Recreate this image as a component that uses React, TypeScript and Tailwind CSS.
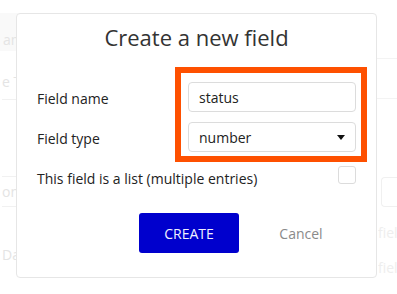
import { useState } from "react";

function Backdrop() {
  return (
    <div className="flex w-full h-full text-[14px] text-[#e4e4e4]">
      <div className="w-[200px] shrink-0 flex flex-col pl-[2px] whitespace-nowrap overflow-hidden">
        <div className="h-[38px] mt-[13px] -ml-[2px] pl-[3px] pt-[14px] bg-[#f9f9f9] flex items-center">
          <span>ame</span>
        </div>
        <div className="h-[49px] flex items-center pt-[12px] border-b border-[#f1f1f1]">
          <span>e Type</span>
        </div>
        <div className="h-[76px]" />
        <div className="h-[31px] flex items-center border-y border-[#f1f1f1]">
          <span>on</span>
        </div>
        <div className="h-[58px] flex items-end">
          <span>Data</span>
        </div>
      </div>
      <div className="flex-1 flex flex-col">
        <div className="h-[59px] border-b border-[#f3f3f3]" />
        <div className="h-[40px] border-b border-[#f3f3f3]" />
        <div className="h-[78px]" />
        <div className="h-[30px] flex justify-end">
          <div className="w-[16px] rounded-l-[4px] border border-r-0 border-[#f0f0f0]" />
        </div>
        <div className="flex flex-col items-end gap-[14px] mt-[15px] text-[#eeeeee]">
          <span className="w-[19px] overflow-hidden whitespace-nowrap">fiel</span>
          <span className="w-[19px] overflow-hidden whitespace-nowrap">fiel</span>
        </div>
      </div>
    </div>
  );
}

export default function App() {
  const [name, setName] = useState("status");
  const [list, setList] = useState(false);

  return (
    <div
      className="relative w-[397px] h-[294px] bg-white overflow-hidden"
      style={{ fontFamily: '"Open Sans", "Noto Sans", sans-serif' }}
    >
      <Backdrop />

      <div className="absolute left-[16px] top-[13px] w-[361px] h-[265px] bg-white border border-[#e6e6e6] rounded-[4px] flex flex-col px-[20px] pt-[8px]">
        <h2 className="text-center text-[22px] leading-[30px] text-[#333]">Create a new field</h2>

        <div className="flex items-center justify-between mt-[30px]">
          <label className="text-[14px] text-[#222] pt-[2px]">Field name</label>
          <input
            value={name}
            onChange={(e) => setName(e.target.value)}
            className="w-[168px] h-[30px] px-[10px] text-[14px] text-[#222] border border-[#dcdcdc] rounded-[4px] outline-none"
          />
        </div>

        <div className="flex items-center justify-between mt-[10px]">
          <label className="text-[14px] text-[#222] pt-[2px]">Field type</label>
          <div className="w-[168px] h-[30px] px-[10px] flex items-center justify-between text-[14px] text-[#222] border border-[#dcdcdc] rounded-[4px]">
            <span>number</span>
            <svg width="8" height="5" viewBox="0 0 8 5">
              <path d="M0 0h8L4 5z" fill="#111" />
            </svg>
          </div>
        </div>

        <div className="flex items-start justify-between mt-[14px]">
          <span className="text-[14px] text-[#222] leading-[20px] mt-[3px]">This field is a list (multiple entries)</span>
          <button
            onClick={() => setList(!list)}
            className="w-[18px] h-[18px] rounded-[3px] border border-[#dcdcdc] bg-white"
          />
        </div>

        <div className="flex justify-end gap-[12px] pr-[5px] mt-[24px]">
          <button className="w-[100px] h-[40px] rounded-[3px] bg-[#0000cd] text-[#f0f0ff] text-[14px]">CREATE</button>
          <button className="w-[100px] h-[40px] text-[14px] text-[#8a8a8a]">Cancel</button>
        </div>
      </div>

      <div className="absolute left-[175px] top-[67px] w-[192px] h-[95px] border-[6px] border-[#fe5000]" />
    </div>
  );
}
